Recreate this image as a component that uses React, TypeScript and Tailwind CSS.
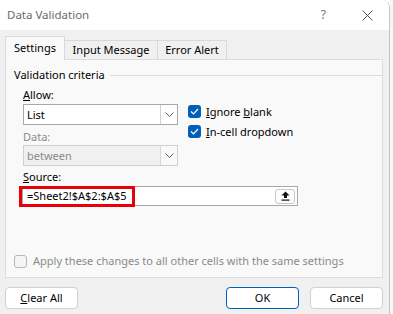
import React from "react";

const Chevron = () => (
  <svg width="9" height="5" viewBox="0 0 9 5" fill="none">
    <path d="M0.5 0.5 L4.5 4.5 L8.5 0.5" stroke="#606060" strokeWidth="1" />
  </svg>
);

const Check = ({ on }: { on: boolean }) =>
  on ? (
    <span className="w-[13px] h-[13px] rounded-[3px] bg-[#005fb8] flex items-center justify-center shrink-0">
      <svg width="9" height="7" viewBox="0 0 9 7" fill="none">
        <path d="M1 3.5 L3.5 6 L8 1" stroke="white" strokeWidth="1.2" />
      </svg>
    </span>
  ) : (
    <span className="w-[13px] h-[13px] rounded-[3px] border border-[#b8b8b8] bg-[#f5f5f5] shrink-0" />
  );

const App = () => {
  return (
    <div
      className="w-[394px] h-[314px] bg-white flex overflow-hidden text-[11px] leading-[16px] text-black"
      style={{ fontFamily: '"Noto Sans", "Open Sans", sans-serif' }}
    >
      <div className="w-[390px] h-[314px] shrink-0 bg-[#f0f0f0] border-r border-[#c4c4c4] rounded-tr-[8px] flex flex-col overflow-hidden">
        {/* title bar */}
        <div className="h-[30px] bg-white flex items-center pl-[7px] shrink-0">
          <span className="text-[#6b6b6b] text-[11.5px]">Data Validation</span>
          <span className="ml-auto text-[#777] text-[12px] mr-[36px]">?</span>
          <svg width="11" height="11" viewBox="0 0 11 11" className="mr-[16px]">
            <path d="M0.5 0.5 L10.5 10.5 M10.5 0.5 L0.5 10.5" stroke="#555" strokeWidth="1" />
          </svg>
        </div>

        {/* tabs */}
        <div className="flex items-end h-[29px] pl-[5px] shrink-0">
          <div className="h-[24px] w-[60px] bg-[#f9f9f9] border border-b-0 border-[#d9d9d9] flex items-center justify-center relative z-10 -mb-px pb-[1px]">
            Settings
          </div>
          <div className="h-[19px] w-[93px] border border-l-0 border-b-0 border-[#d9d9d9] flex items-center justify-center">
            Input Message
          </div>
          <div className="h-[19px] w-[69px] border border-l-0 border-b-0 border-[#d9d9d9] flex items-center justify-center">
            Error Alert
          </div>
        </div>

        {/* panel */}
        <div className="ml-[5px] w-[378px] h-[219px] bg-[#f9f9f9] border border-[#dcdcdc] shrink-0 flex flex-col relative">
          <div className="flex items-center mt-[7px] pl-[8px] h-[16px]">
            <span>Validation criteria</span>
            <span className="flex-1 h-px bg-[#dcdcdc] ml-[5px]" />
          </div>

          <div className="flex pl-[17px] mt-[4px]">
            <div className="w-[155px] flex flex-col">
              <div className="h-[16px] flex items-center">
                <span><span className="underline">A</span>llow:</span>
              </div>
              <div className="mt-[1px] h-[21px] bg-white border border-[#a8a8a8] flex items-stretch">
                <span className="flex-1 flex items-center pl-[3px]">List</span>
                <span className="w-[17px] border-l border-[#d0d0d0] flex items-center justify-center">
                  <Chevron />
                </span>
              </div>
              <div className="h-[16px] flex items-center mt-[4px] text-[#8a8a8a]">Data:</div>
              <div className="h-[21px] bg-[#f0f0f0] border border-[#cfcfcf] flex items-stretch">
                <span className="flex-1 flex items-center pl-[3px] text-[#8a8a8a]">between</span>
                <span className="w-[17px] border-l border-[#d8d8d8] bg-[#f9f9f9] flex items-center justify-center">
                  <Chevron />
                </span>
              </div>
            </div>
            <div className="ml-[10px] flex flex-col gap-[7px] mt-[18px]">
              <div className="flex items-center gap-[5px] h-[13px]">
                <Check on />
                <span>
                  <span className="underline">I</span>gnore <span className="underline">b</span>lank
                </span>
              </div>
              <div className="flex items-center gap-[5px] h-[13px]">
                <Check on />
                <span>
                  <span className="underline">I</span>n-cell dropdown
                </span>
              </div>
            </div>
          </div>

          <div className="pl-[17px] mt-[3px] h-[16px] flex items-center">
            <span><span className="underline">S</span>ource:</span>
          </div>
          <div className="ml-[16px] mt-[1px] w-[276px] h-[20px] bg-white border border-[#a8a8a8] flex items-center relative">
            <span className="pl-[4px]">=Sheet2!$A$2:$A$5</span>
            <span className="ml-auto mr-[2px] w-[20px] h-[15px] rounded-[3px] border border-[#c8c8c8] bg-[#fdfdfd] flex items-center justify-center">
              <svg width="9" height="10" viewBox="0 0 9 10">
                <path d="M4.5 0.5 L8.5 4.5 L6 4.5 L6 7 L3 7 L3 4.5 L0.5 4.5 Z" fill="#111" />
                <rect x="0.5" y="8.5" width="8" height="1.2" fill="#111" />
              </svg>
            </span>
            <span className="absolute left-[-4px] top-[-1px] w-[116px] h-[21px] border-[3px] border-[#e8000b]" />
          </div>

          <div className="mt-auto mb-[8px] pl-[8px] flex items-center gap-[6px] text-[#8a8a8a]">
            <Check on={false} />
            <span>Apply these changes to all other cells with the same settings</span>
          </div>
        </div>

        {/* buttons */}
        <div className="flex items-center mt-[9px] px-[5px] shrink-0">
          <button className="w-[73px] h-[22px] bg-white border border-[#d0d0d0] rounded-[4px]">
            <span className="underline">C</span>lear All
          </button>
          <button className="ml-auto w-[73px] h-[22px] bg-white border border-[#005fb8] rounded-[4px]">
            OK
          </button>
          <button className="ml-[11px] mr-[1px] w-[73px] h-[22px] bg-white border border-[#d0d0d0] rounded-[4px]">
            Cancel
          </button>
        </div>
      </div>
      <div className="flex-1 bg-[#f6f6f6] border-r border-[#d8d8d8]" />
    </div>
  );
};

export default App;
